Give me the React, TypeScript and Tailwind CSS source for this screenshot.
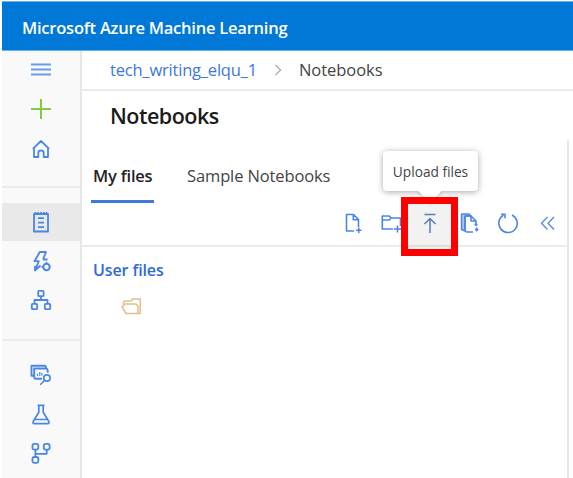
import type { ReactNode } from "react";

function Icon({ children, className = "" }: { children: ReactNode; className?: string }) {
  return (
    <svg
      viewBox="0 0 22 22"
      className={`h-[22px] w-[22px] shrink-0 fill-none stroke-[#4a86e8] ${className}`}
      strokeWidth="1.5"
      strokeLinejoin="round"
    >
      {children}
    </svg>
  );
}

function NavItem({ children, className = "h-10" }: { children: ReactNode; className?: string }) {
  return (
    <a className={`flex shrink-0 items-center justify-center ${className}`}>
      <Icon>{children}</Icon>
    </a>
  );
}

function Sidebar() {
  return (
    <nav className="flex w-[80px] shrink-0 flex-col border-r-2 border-[#e6e6e6] bg-[#f9f9f9]">
      <NavItem className="h-9">
        <path d="M1 6.5h20M1 11.5h20M1 16.5h20" stroke="#6a9bea" strokeWidth="2" />
      </NavItem>
      <NavItem className="h-11">
        <path d="M11 1v20M1 11h20" stroke="#85cc3c" strokeWidth="2" />
      </NavItem>
      <NavItem className="h-9">
        <path d="M2.8 10.8 11 3l8.2 7.8M4 10v9h4.3v-4.5q0-2 2.7-2t2.7 2V19H18v-9" strokeWidth="1.8" />
      </NavItem>
      <div className="mt-[19px] mb-[15px] h-0.5 bg-[#ebebeb]" />
      <NavItem className="h-[38px] bg-[#e9e9e9]">
        <path d="M4 3h14v17.5H4z" strokeWidth="1.8" />
        <path d="M5.5 1v3M8.2 1v3M11 1v3M13.8 1v3M16.5 1v3M8 7.2h6M8 11.7h6M8 16.2h6" strokeWidth="1.7" />
      </NavItem>
      <NavItem className="h-[39px]">
        <path d="M13 9.5h4.5M13 9.5 16 2H9.8L4.5 11.2h4.3L5 20.5l5.5-5M5 21v-5" strokeWidth="1.8" />
        <circle cx="16.5" cy="17" r="3.2" strokeWidth="2" />
        <path d="M16.5 11.8v2M11.3 17h2" />
      </NavItem>
      <NavItem className="h-[39px]">
        <g strokeWidth="1.8">
          <rect x="8.2" y="1.8" width="5.4" height="5.4" rx="1" />
          <rect x="1.8" y="14.8" width="5.4" height="5.4" rx="1" />
          <rect x="14.8" y="14.8" width="5.4" height="5.4" rx="1" />
          <path d="M11 7.2V11M4.5 14.8V11h13v3.8" />
        </g>
      </NavItem>
      <div className="mt-5 mb-3.5 h-0.5 bg-[#ebebeb]" />
      <NavItem>
        <path d="M12 14.8H5.8Q4.5 14.8 4.2 13.2V4.5H16q1.7.2 1.7 2v2.3M4 11.8H1.5V1.8h13q1.5 0 1.5 2" strokeWidth="1.9" />
        <path d="M7.5 12V9.8M9.8 12V8M12 11.5V9" strokeWidth="1.2" />
        <circle cx="16.9" cy="14" r="3.2" strokeWidth="1.7" />
        <path d="m14.6 16.2-4.4 4.6" />
      </NavItem>
      <NavItem>
        <path d="M7.5 1.3h7M8.8 1.5v6.8L3.3 17.2q-1 2.5 1.1 2.5h13.2q2.1 0 1.1-2.5L13.2 8.3V1.5M5 15.5h12" strokeWidth="1.7" />
      </NavItem>
      <NavItem className="h-9">
        <g strokeWidth="1.8">
          <rect x="2.5" y="1.8" width="5.8" height="5.8" rx="1.8" />
          <rect x="13.8" y="1.8" width="5.8" height="5.8" rx="1.8" />
          <rect x="2.5" y="15" width="5.8" height="5.8" rx="1.8" />
          <path d="M5.4 7.6V15M5.4 11.8h11.3V7.6" />
        </g>
      </NavItem>
    </nav>
  );
}

function Toolbar() {
  return (
    <div className="flex h-[41px] items-center border-b-2 border-[#ebebeb] pb-[5px] pl-[260px]">
      <Icon className="mr-4">
        <path d="M12 19H4.5V2.5h7l5 5V15M11.3 2.5v5.2h5.2M14 18.2h5.5M16.8 15.5V21" strokeWidth="1.6" />
      </Icon>
      <Icon className="mr-[17px]">
        <path d="M13 17H2.3V4h7l1.7 2h9.5v8M2.3 8h7l1.7-2M14 17h7M17.5 13.5v7" strokeWidth="1.6" />
      </Icon>
      <Icon className="mr-[18px]">
        <path d="M5.5 2.5h11M11 21V7M5.5 12 11 6.5l5.5 5.5" stroke="#5f83c6" strokeWidth="1.5" />
      </Icon>
      <Icon className="mr-4">
        <path d="M2.5 17.5V2H10l2 2H6v15z" fill="#a9c5f2" />
        <path d="M6 4h6l5 5v2M12 4v5h5M14 20H7.5L6 18.5V4M15.5 12.5h3M17 11v3M16 17.5h3.5M17.7 15.5v4" strokeWidth="1.6" />
      </Icon>
      <Icon className="mr-[17px]">
        <path d="M15 3A9.2 9.2 0 1 1 6.5 3.3M4 2.2h4v4" strokeWidth="1.6" />
      </Icon>
      <Icon>
        <path d="m11.5 5-6 6.2 6 6.3M18 5l-6 6.2 6 6.3" stroke="#5b8be0" strokeWidth="1.4" />
      </Icon>
    </div>
  );
}

export default function App() {
  return (
    <div className="relative flex h-[478px] w-[573px] flex-col overflow-hidden bg-white pl-0.5 font-['Open_Sans','Noto_Sans',sans-serif] whitespace-nowrap">
      <header className="mt-px flex h-[50px] shrink-0 items-center border-y border-[#69b1ea] bg-[#0078d7] pt-1 pl-5 text-[16.5px] font-semibold text-white">
        <span className="tracking-[-0.22px]">Microsoft Azure Machine Learning</span>
      </header>
      <div className="flex min-h-0 flex-1">
        <Sidebar />
        <main className="flex min-w-0 flex-1 flex-col">
          <div className="flex h-10 items-center border-b-2 border-[#ebebeb] pl-7 text-[16.5px]">
            <a className="tracking-[-0.2px] text-[#3c78dc]">tech_writing_elqu_1</a>
            <svg viewBox="0 0 8 14" className="mr-[17px] ml-[17px] h-3 w-2 fill-none stroke-[#a9a59d]" strokeWidth="1.4">
              <path d="m1 1 6 6-6 6" />
            </svg>
            <span className="tracking-[-0.05px] text-[#444]">Notebooks</span>
          </div>
          <h1 className="h-[49px] pt-[9px] pl-7 text-[21.5px] leading-8 font-semibold tracking-[-0.5px] text-[#1b1b1b]">Notebooks</h1>
          <div className="mr-1 flex flex-1 flex-col border-r-2 border-[#e8e8e8]">
            <div className="flex h-[66px] gap-[33px] pt-5 pl-[9px] text-[16.5px]">
              <div className="h-[43px] w-[63px] border-b-[3px] border-[#3f78e0] pt-1 pl-0.5 font-semibold tracking-[-0.2px] text-[#222]">My files</div>
              <div className="pt-1 tracking-[-0.12px] text-[#444]">Sample Notebooks</div>
            </div>
            <Toolbar />
            <div className="pt-[11px] pl-[11px] text-[16px] font-semibold tracking-[-0.1px] text-[#2f69d9]">User files</div>
            <Icon className="mt-[14px] ml-[38px] stroke-[#e3be86]">
              <path d="M3.5 9V6l1-1H11l1.5-2h7.7v14.5H6L2 11l3-3h11l2 2.5v7" />
            </Icon>
          </div>
        </main>
      </div>
      <div className="absolute top-[151px] left-[383px] flex h-10 w-[95px] items-center justify-center rounded-sm bg-white pt-0.5 text-[13.7px] text-[#444] shadow-[0_1px_6px_rgba(0,0,0,0.35)]">
        Upload files
        <div className="absolute top-[30px] left-[38px] h-[18px] w-[18px] rotate-45 bg-white shadow-[2px_2px_3px_rgba(0,0,0,0.12)]" />
      </div>
      <div className="absolute top-[197px] left-[401px] h-[59px] w-[57px] border-[7px] border-[#fe0000] bg-black/5" />
    </div>
  );
}
